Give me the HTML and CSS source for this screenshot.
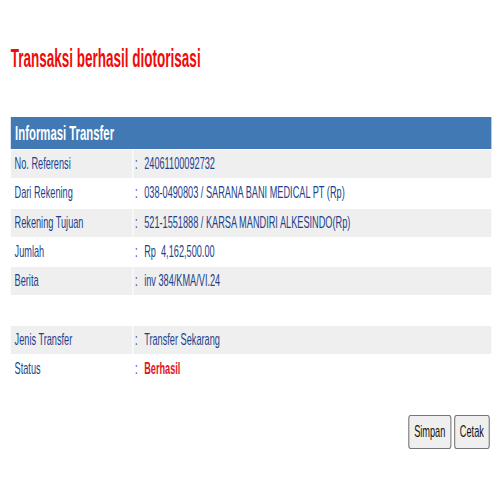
FILE: index.html
```html
<!DOCTYPE html>
<html>
<head>
<meta charset="utf-8">
<link rel="stylesheet" href="styles.css">
</head>
<body>
<div class="viewport">
<div class="page">
  <h1 class="title">Transaksi berhasil diotorisasi</h1>
  <div class="info">
    <div class="info-head">Informasi Transfer</div>
    <div class="row alt"><div class="label">No. Referensi</div><div class="value"><span class="colon">:</span>24061100092732</div></div>
    <div class="row"><div class="label">Dari Rekening</div><div class="value"><span class="colon">:</span>038-0490803 / SARANA BANI MEDICAL PT (Rp)</div></div>
    <div class="row alt"><div class="label">Rekening Tujuan</div><div class="value"><span class="colon">:</span>521-1551888 / KARSA MANDIRI ALKESINDO(Rp)</div></div>
    <div class="row"><div class="label">Jumlah</div><div class="value"><span class="colon">:</span>Rp&nbsp;&nbsp;4,162,500.00</div></div>
    <div class="row alt"><div class="label">Berita</div><div class="value"><span class="colon">:</span>inv 384/KMA/VI.24</div></div>
    <div class="row"><div class="label"></div><div class="value"></div></div>
    <div class="row alt"><div class="label">Jenis Transfer</div><div class="value"><span class="colon">:</span>Transfer Sekarang</div></div>
    <div class="row"><div class="label">Status</div><div class="value"><span class="colon">:</span><span class="status">Berhasil</span></div></div>
  </div>
  <div class="actions">
    <button class="btn" type="button">Simpan</button>
    <button class="btn" type="button">Cetak</button>
  </div>
</div>
</div>
</body>
</html>
```
FILE: styles.css
```css
html, body {
  margin: 0;
  padding: 0;
  overflow: hidden;
  background: #ffffff;
}
.viewport {
  width: 500px;
  height: 500px;
  overflow: hidden;
}
.page {
  width: 926px;
  box-sizing: border-box;
  padding: 44px 16px 0 20px;
  transform: scaleX(0.54);
  transform-origin: 0 0;
  font-family: "Liberation Sans", Arial, sans-serif;
}
.title {
  margin: 0;
  font-size: 25px;
  line-height: 29px;
  font-weight: bold;
  color: #f00a0a;
}
.info {
  margin-top: 44px;
  display: flex;
  flex-direction: column;
  gap: 1px;
}
.info-head {
  height: 32px;
  background: #4179b4;
  color: #ffffff;
  font-size: 21px;
  font-weight: bold;
  line-height: 32px;
  padding-left: 8px;
}
.row {
  display: grid;
  grid-template-columns: 225px 1fr;
  column-gap: 2px;
  height: 28.3px;
  font-size: 17px;
  color: #223f8c;
}
.label, .value {
  display: flex;
  align-items: center;
  white-space: nowrap;
}
.label {
  padding-left: 7px;
}
.value {
  padding-left: 3px;
}
.row.alt .label, .row.alt .value {
  background: #efefef;
}
.colon {
  width: 17px;
  flex: none;
}
.status {
  color: #e4121b;
  font-weight: bold;
}
.actions {
  margin-top: 32px;
  display: flex;
  justify-content: flex-end;
  gap: 5px;
  padding-right: 3px;
}
.btn {
  height: 34px;
  padding: 0 9px;
  font-family: "Liberation Sans", Arial, sans-serif;
  font-size: 17px;
  color: #111111;
  background: #efefef;
  border-style: solid;
  border-color: #767676;
  border-width: 1px 2px;
  border-radius: 4px;
}
```
